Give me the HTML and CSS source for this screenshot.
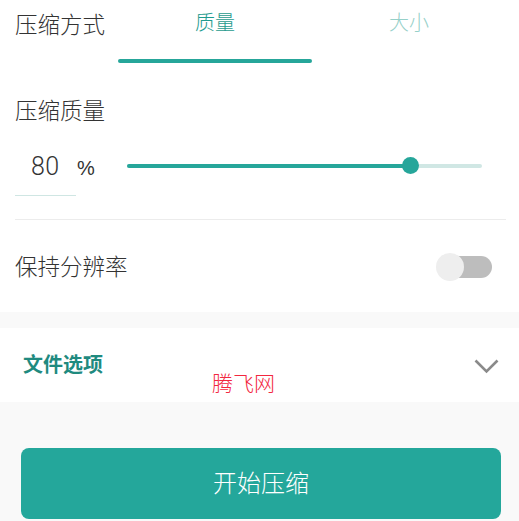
FILE: index.html
```html
<!DOCTYPE html>
<html lang="zh">
<head>
<meta charset="utf-8">
<link rel="stylesheet" href="styles.css">
</head>
<body>
<div class="page">
  <div class="header">
    <div class="title">压缩方式</div>
    <div class="tab active">质量</div>
    <div class="tab">大小</div>
  </div>

  <div class="quality">
    <div class="label">压缩质量</div>
    <div class="input-row">
      <div class="num-input"><span class="num">80</span><span class="pct">%</span></div>
      <div class="slider">
        <div class="track"></div>
        <div class="fill" style="width:80%"></div>
        <div class="thumb" style="left:80%"></div>
      </div>
    </div>
    <div class="divider"></div>
  </div>

  <div class="toggle-row">
    <div class="label">保持分辨率</div>
    <div class="switch"><div class="switch-thumb"></div></div>
  </div>

  <div class="band"></div>

  <div class="options">
    <div class="options-title">文件选项</div>
    <svg class="chevron" width="25" height="15" viewBox="0 0 25 15"><polyline points="1.5,1.5 12.5,12.5 23.5,1.5" fill="none" stroke="#8a8a8a" stroke-width="2.6"/></svg>
    <div class="watermark">腾飞网</div>
  </div>

  <div class="footer">
    <div class="button">开始压缩</div>
  </div>
</div>
</body>
</html>
```

FILE: styles.css
```css
* { box-sizing: border-box; }
html, body { margin: 0; padding: 0; background: #ffffff; }
body {
  font-family: Roboto, "Noto Sans CJK SC", sans-serif;
  color: #333333;
  width: 519px;
  height: 521px;
  overflow: hidden;
}
.page { display: flex; flex-direction: column; height: 521px; }

.header { display: flex; height: 64px; }
.title {
  width: 118px;
  padding-left: 15px;
  padding-top: 9px;
  font-size: 22.5px;
  line-height: 32px;
  color: #333;
  font-weight: 300;
}
.tab {
  width: 194px;
  position: relative;
  text-align: center;
  font-size: 20px;
  line-height: 28px;
  padding-top: 9px;
  color: #96d0c9;
  font-weight: 300;
}
.tab.active { color: #1f9b8e; }
.tab.active::after {
  content: "";
  position: absolute;
  left: 0; right: 0;
  top: 59px;
  height: 4px;
  border-radius: 2px;
  background: #26a69a;
}

.quality { padding: 32px 13px 0 15px; }
.label { font-size: 22.5px; line-height: 30px; color: #333; font-weight: 300; }
.input-row { display: flex; align-items: center; margin-top: 10px; height: 60px; }
.num-input {
  width: 61px;
  height: 60px;
  border-bottom: 1px solid #cfe6e3;
  display: flex;
  align-items: center;
  padding-left: 16px;
  position: relative;
  padding-top: 1px;
}
.num { font-size: 25px; color: #333; letter-spacing: 0.3px; font-weight: 300; }
.pct {
  position: absolute;
  left: 62px;
  top: 19px;
  font-family: "Liberation Sans", Roboto, sans-serif;
  font-size: 20px;
  line-height: 26px;
  color: #333;
}
.slider { position: relative; margin-left: 51px; width: 355px; height: 20px; }
.track {
  position: absolute; left: 0; right: 0; top: 8px; height: 4px;
  border-radius: 2px; background: #d0e7e4;
}
.fill {
  position: absolute; left: 0; top: 8px; height: 4px;
  border-radius: 2px; background: #26a69a;
}
.thumb {
  position: absolute; top: 1px; width: 17px; height: 17px;
  margin-left: -9px; border-radius: 50%; background: #26a69a;
}
.divider { height: 1px; background: #ececec; margin-top: 23px; }

.toggle-row {
  height: 92px;
  display: flex;
  align-items: center;
  justify-content: space-between;
  padding: 2px 27px 0 15px;
}
.switch {
  position: relative;
  width: 55px; height: 22px;
  border-radius: 11px;
  background: #bdbdbd;
}
.switch-thumb {
  position: absolute; left: -1px; top: -3px;
  width: 28px; height: 28px; border-radius: 50%;
  background: #eeeeee;
}

.band { height: 16px; background: #f9f9f9; }

.options {
  position: relative;
  height: 74px;
  display: flex;
  align-items: center;
  justify-content: space-between;
  padding: 0 20px 0 23px;
}
.options-title { font-size: 20px; font-weight: bold; color: #1f8a7f; line-height: 28px; }
.chevron { margin-top: 2px; }
.watermark {
  position: absolute;
  left: 212px; top: 41px;
  font-size: 21px;
  line-height: 26px;
  color: #f2283f;
  font-family: "Noto Sans CJK SC", sans-serif;
  font-weight: 300;
}

.footer { flex: 1; background: #f9f9f9; padding: 46px 18px 0 21px; }
.button {
  height: 71px;
  border-radius: 8px;
  background: #24a79b;
  color: #ffffff;
  font-size: 24px;
  font-weight: 300;
  display: flex;
  align-items: center;
  justify-content: center;
  padding-bottom: 5px;
}
```
